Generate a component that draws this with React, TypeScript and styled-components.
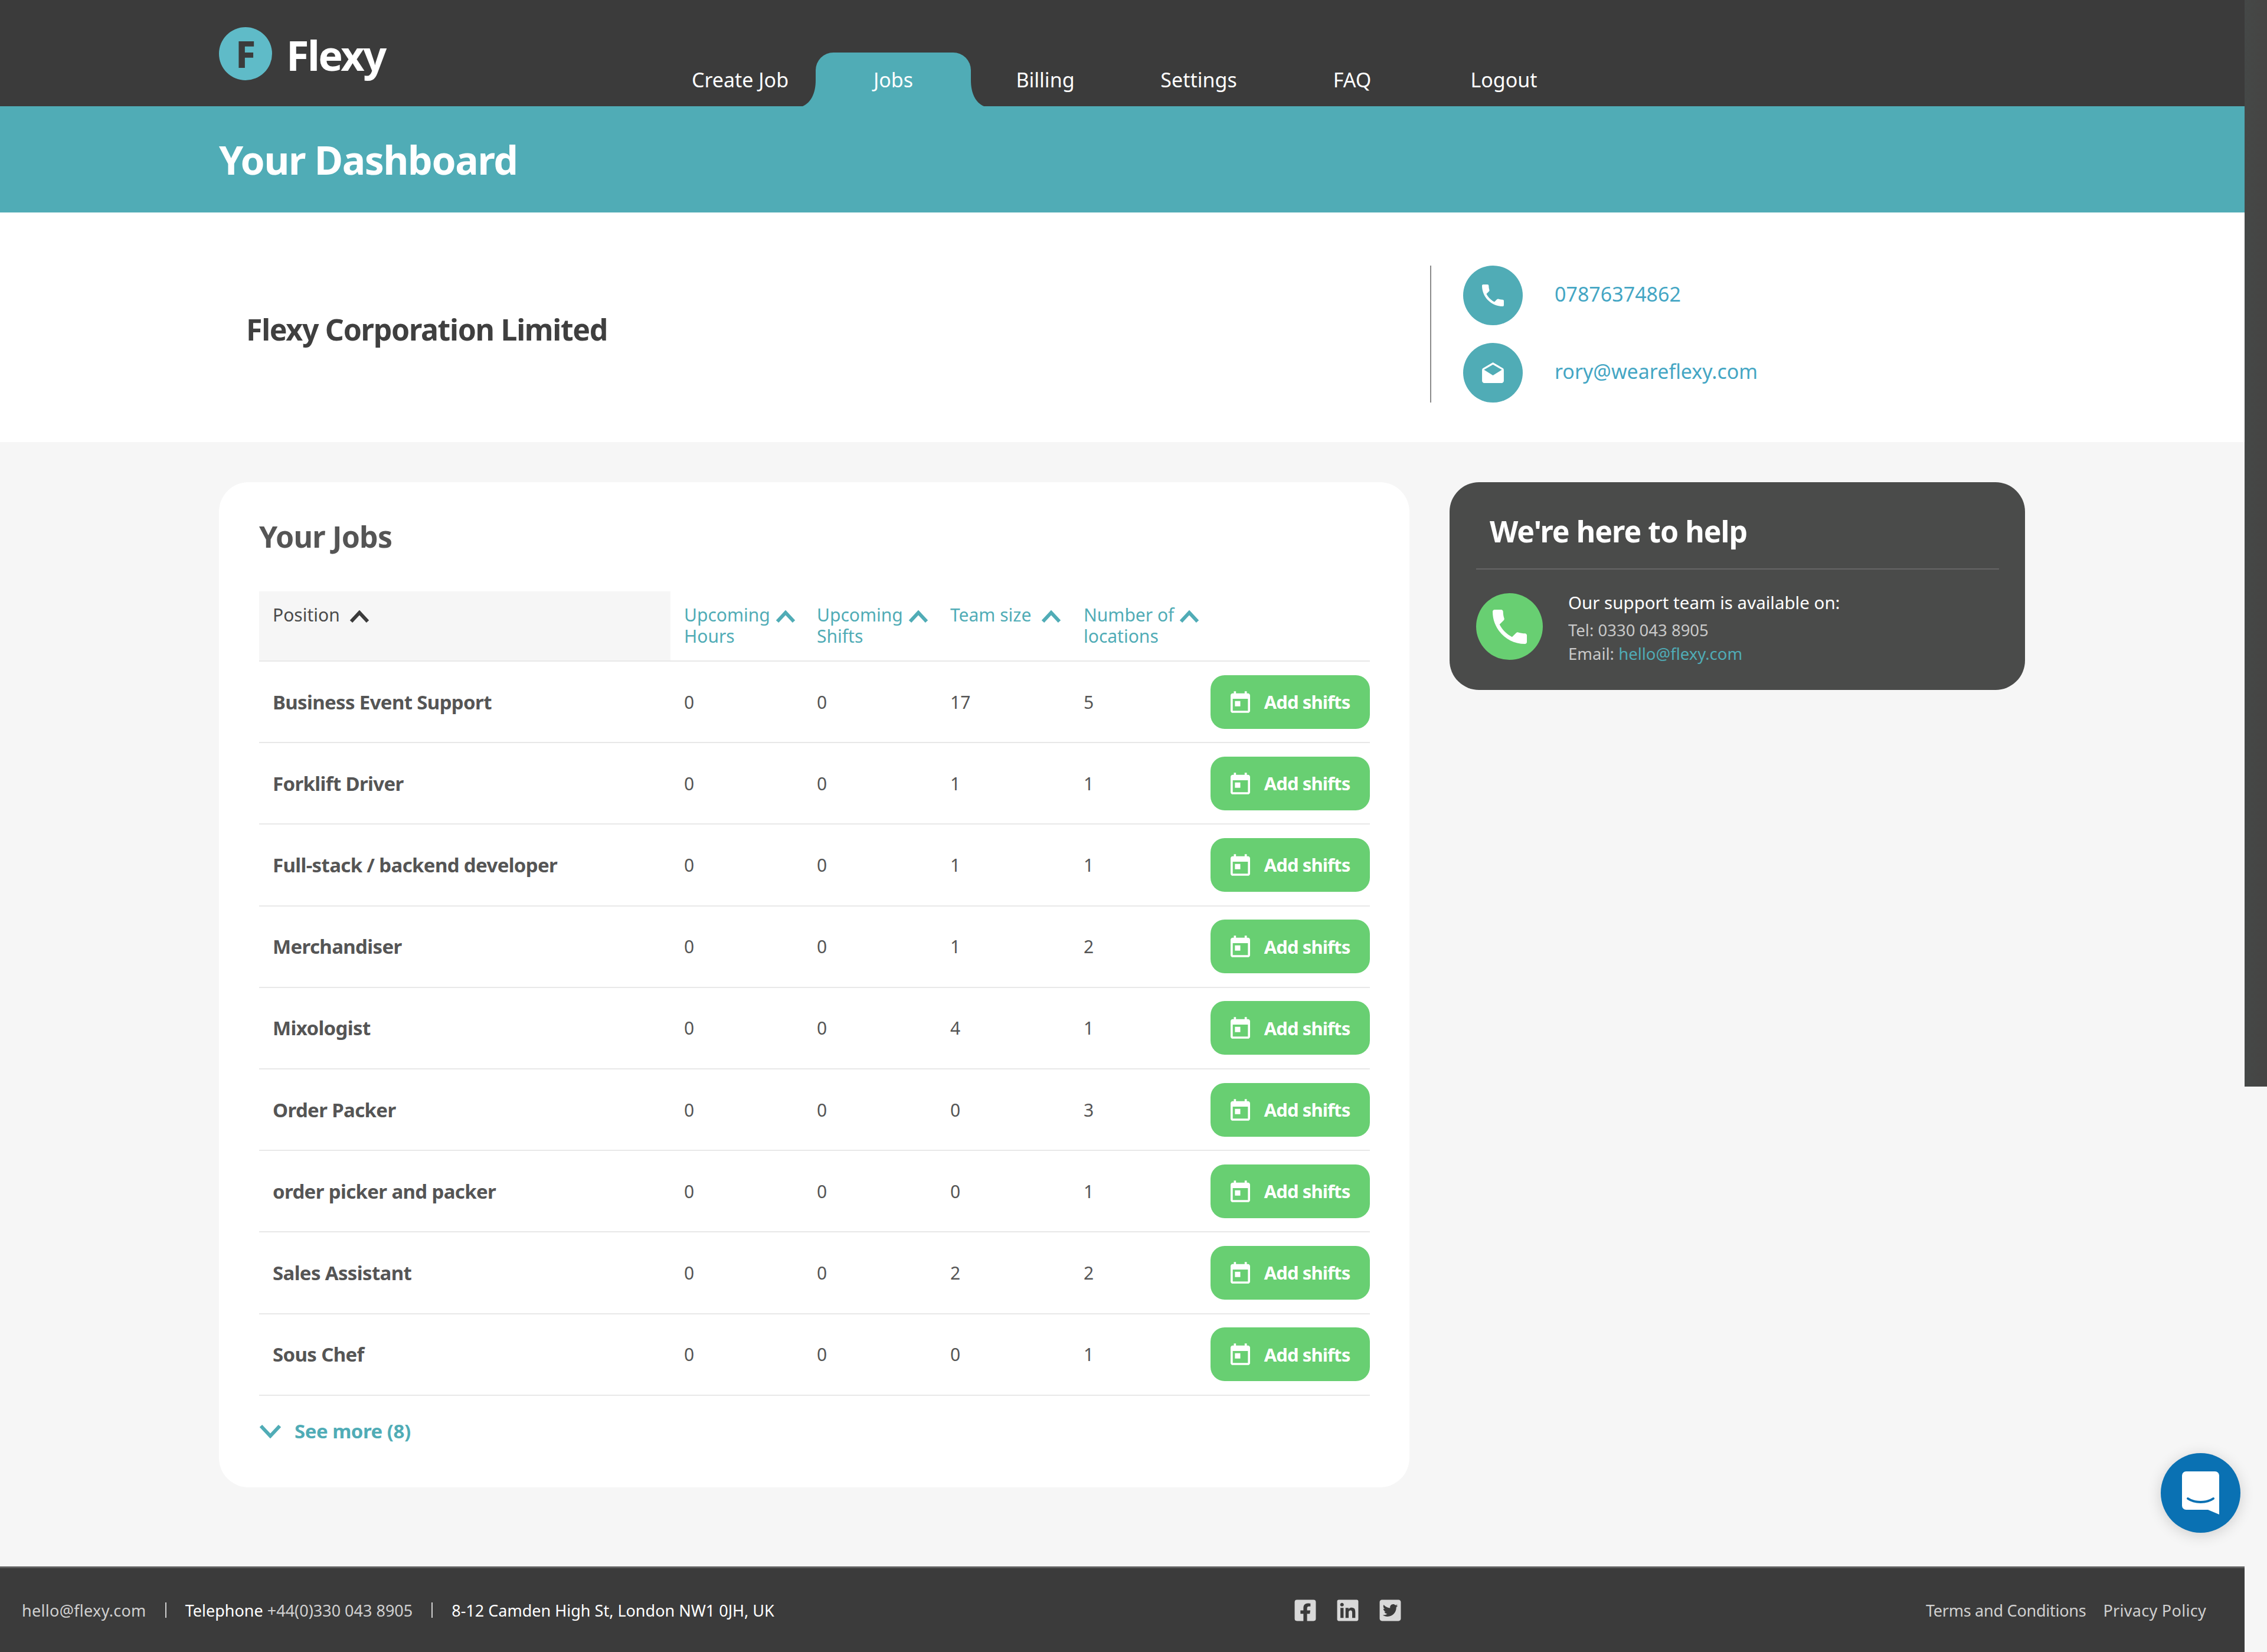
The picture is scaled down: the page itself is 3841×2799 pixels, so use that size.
import React from "react";
import styled, { createGlobalStyle } from "styled-components";
import { FaFacebookSquare, FaLinkedin, FaTwitterSquare } from "react-icons/fa";

const FONT = `"Noto Sans", "Lato", sans-serif`;

const Global = createGlobalStyle`
  html, body { margin: 0; padding: 0; background: #f6f6f6; }
  body { font-family: ${FONT}; color: #555; }
`;

const Page = styled.div`
  width: 3841px;
  height: 2799px;
  display: flex;
  position: relative;
  overflow: hidden;
`;
const Main = styled.div`
  width: 3803px;
  display: flex;
  flex-direction: column;
`;
const ScrollThumb = styled.div`
  width: 38px;
  height: 1841px;
  background: linear-gradient(90deg, #454847, #454443);
`;
const Header = styled.header`
  height: 180px;
  background: #3b3b3b;
  padding-left: 371px;
  display: flex;
  align-items: flex-start;
`;
const Logo = styled.div`
  width: 755px;
  height: 90px;
  margin-top: 46px;
  display: flex;
  align-items: center;
  gap: 24px;
`;
const LogoMark = styled.div`
  width: 90px;
  height: 90px;
  border-radius: 50%;
  background: #5fbbc8;
  color: #3b3b3b;
  font: 800 62px ${FONT};
  display: flex;
  align-items: center;
  justify-content: center;
`;
const LogoWord = styled.div`
  color: #fff;
  font: 700 70px/90px ${FONT};
  letter-spacing: -2.5px;
  margin-top: 3px;
`;
const Nav = styled.nav`
  display: flex;
  align-self: flex-end;
  height: 91px;
`;
const Tab = styled.a<{ $active?: boolean; $w: number }>`
  position: relative;
  width: ${(p) => p.$w}px;
  display: flex;
  justify-content: center;
  padding-top: 24px;
  box-sizing: border-box;
  color: #fff;
  font-size: 34px;
  line-height: 45px;
  background: ${(p) => (p.$active ? "#50acb6" : "transparent")};
  border-radius: ${(p) => (p.$active ? "30px 30px 0 0" : "0")};
`;
const Flare = styled.svg<{ $side: "left" | "right" }>`
  position: absolute;
  bottom: 0;
  width: 22px;
  height: 44px;
  ${(p) => (p.$side === "left" ? "left: -22px;" : "right: -22px;")}
`;
const Band = styled.div`
  height: 180px;
  background: #50acb6;
  padding-left: 371px;
  display: flex;
  align-items: center;
`;
const BandTitle = styled.h1`
  margin: 0;
  color: #fff;
  font: 700 66px/90px ${FONT};
  letter-spacing: -1.4px;
`;
const Company = styled.section`
  height: 389px;
  background: #fff;
  box-sizing: border-box;
  padding: 90px 0 0 417px;
  display: flex;
`;
const CompanyName = styled.h2`
  width: 2006px;
  margin: 0;
  font: 700 50px/216px ${FONT};
  letter-spacing: -1.3px;
  color: #3f3f3f;
`;
const ContactList = styled.div`
  height: 232px;
  border-left: 2px solid #8a8a8a;
  padding-left: 54px;
  display: flex;
  flex-direction: column;
  gap: 30px;
`;
const ContactRow = styled.div`
  display: flex;
  align-items: center;
  gap: 54px;
  height: 101px;
`;
const ContactIcon = styled.div`
  width: 101px;
  height: 101px;
  border-radius: 50%;
  background: #50acb6;
  display: flex;
  align-items: center;
  justify-content: center;
`;
const ContactLink = styled.a`
  color: #44a6c4;
  font-size: 34px;
  line-height: 50px;
  margin-top: -5px;
`;
const Content = styled.main`
  flex: 1;
  padding: 68px 0 0 371px;
  display: flex;
  align-items: flex-start;
  gap: 68px;
`;
const Card = styled.section`
  width: 2017px;
  height: 1703px;
  box-sizing: border-box;
  background: #fff;
  border-radius: 50px;
  padding: 53px 67px 0 68px;
`;
const CardTitle = styled.h2`
  margin: 0 0 54px;
  font: 700 50px/78px ${FONT};
  letter-spacing: -0.8px;
  color: #555;
`;
const Row = styled.div`
  display: grid;
  grid-template-columns: 697px 225px 226px 226px 226px 1fr;
  border-bottom: 2px solid #e8e8e8;
`;
const HeadCell = styled.div<{ $shade?: boolean }>`
  height: 117px;
  box-sizing: border-box;
  padding: 22px 0 0 23px;
  font-size: 30px;
  line-height: 36px;
  color: ${(p) => (p.$shade ? "#4a4a4a" : "#50acb6")};
  background: ${(p) => (p.$shade ? "#f6f6f6" : "transparent")};
`;
const Caret = styled.svg`
  display: inline-block;
  vertical-align: -3px;
`;
const NameCell = styled.div`
  height: 136.2px;
  padding-left: 23px;
  display: flex;
  align-items: center;
  font-weight: 700;
  font-size: 33px;
  letter-spacing: -0.65px;
  color: #555;
`;
const NumCell = styled.div`
  height: 136.2px;
  padding-left: 23px;
  display: flex;
  align-items: center;
  font-size: 30px;
  color: #555;
`;
const ActionCell = styled.div`
  display: flex;
  align-items: center;
  justify-content: flex-end;
`;
const AddButton = styled.button`
  width: 270px;
  height: 91px;
  border: 0;
  border-radius: 24px;
  background: #68cf72;
  color: #fff;
  font: 700 31px ${FONT};
  letter-spacing: -0.9px;
  display: flex;
  align-items: center;
  justify-content: center;
  gap: 24px;
  padding: 0;
`;
const SeeMore = styled.a`
  display: flex;
  align-items: center;
  gap: 22px;
  margin-top: 38px;
  color: #50acb6;
  font-weight: 700;
  font-size: 33px;
  letter-spacing: -0.5px;
  line-height: 44px;
`;
const Help = styled.aside`
  width: 975px;
  height: 352px;
  box-sizing: border-box;
  border-radius: 50px;
  background: #4a4b4a;
  padding: 44px 44px 0 45px;
`;
const HelpTitle = styled.h2`
  margin: 0;
  padding: 4px 0 22px 23px;
  height: 104px;
  box-sizing: border-box;
  border-bottom: 2px solid #666;
  color: #fff;
  font: 700 50px/70px ${FONT};
  letter-spacing: -1px;
`;
const HelpBody = styled.div`
  display: flex;
  gap: 43px;
  margin-top: 40px;
`;
const HelpIcon = styled.div`
  width: 113px;
  height: 113px;
  border-radius: 50%;
  background: #68cf72;
  display: flex;
  align-items: center;
  justify-content: center;
`;
const HelpText = styled.div`
  display: flex;
  flex-direction: column;
  color: #c9c9c9;
  font-size: 27.5px;
  line-height: 40px;
`;
const HelpLead = styled.div`
  color: #fff;
  font-size: 29.5px;
  line-height: 38px;
  margin: -3px 0 8px;
`;
const HelpLink = styled.span`
  color: #50acb6;
`;
const Footer = styled.footer`
  height: 145px;
  box-sizing: border-box;
  background: #3b3b3b;
  border-top: 3px solid #5f5f5f;
  padding: 0 65px 0 37px;
  display: grid;
  grid-template-columns: 2154px 1fr auto;
  align-items: center;
  font-size: 27px;
  color: #d0d0d0;
`;
const FooterLeft = styled.div`
  display: flex;
  align-items: center;
`;
const FooterMail = styled.span`
  letter-spacing: 0.3px;
`;
const FooterSep = styled.span`
  width: 2px;
  height: 26px;
  background: #d0d0d0;
  margin: 0 32px;
`;
const FooterStrong = styled.span`
  color: #fff;
`;
const Social = styled.div`
  display: flex;
  gap: 31px;
  color: #d9d9d9;
  font-size: 41px;
  line-height: 0;
`;
const FooterLinks = styled.div`
  display: flex;
  gap: 29px;
`;
const FooterLink = styled.span<{ $tight?: boolean }>`
  letter-spacing: ${(p) => (p.$tight ? "-0.25px" : "0.3px")};
`;
const Chat = styled.button`
  position: absolute;
  left: 3661px;
  top: 2462px;
  width: 135px;
  height: 135px;
  border: 0;
  padding: 0;
  border-radius: 50%;
  background: #0a71b3;
  box-shadow: 0 4px 24px rgba(0, 0, 0, 0.16);
  display: flex;
  align-items: center;
  justify-content: center;
`;

const PhoneIcon = ({ size }: { size: number }) => (
  <svg width={size} height={size} viewBox="3 3 18 18" fill="#fff">
    <path d="M6.62 10.79c1.44 2.83 3.76 5.14 6.59 6.59l2.2-2.2c.27-.27.67-.36 1.02-.24 1.12.37 2.33.57 3.57.57.55 0 1 .45 1 1V20c0 .55-.45 1-1 1-9.39 0-17-7.61-17-17 0-.55.45-1 1-1h3.5c.55 0 1 .45 1 1 0 1.25.2 2.45.57 3.57.11.35.03.74-.25 1.02l-2.2 2.2z" />
  </svg>
);

const MailIcon = () => (
  <svg width="37" height="35" viewBox="2 1 20 19" fill="#fff">
    <path d="M21.99 8c0-.72-.37-1.35-.94-1.7L12 1 2.95 6.3C2.38 6.65 2 7.28 2 8v10c0 1.1.9 2 2 2h16c1.1 0 2-.9 2-2l-.01-10zM12 13L3.74 7.84 12 3l8.26 4.84L12 13z" />
  </svg>
);

const CalendarIcon = () => (
  <svg width="33" height="37" viewBox="3 1 18 20" fill="#fff">
    <path d="M19 3h-1V1h-2v2H8V1H6v2H5c-1.11 0-1.99.9-1.99 2L3 19c0 1.1.89 2 2 2h14c1.1 0 2-.9 2-2V5c0-1.1-.9-2-2-2zm0 16H5V8h14v11zM7 10h5v5H7z" />
  </svg>
);

const Up = ({ color }: { color: string }) => (
  <Caret width={36} height={22} viewBox="0 0 34 22" fill="none">
    <path d="M3 19 17 4l14 15" stroke={color} strokeWidth="6" strokeLinejoin="miter" />
  </Caret>
);

const Down = () => (
  <svg width="38" height="24" viewBox="0 0 38 24" fill="none">
    <path d="M3 3 19 20 35 3" stroke="#50acb6" strokeWidth="6" />
  </svg>
);

const ChatGlyph = () => (
  <svg width="63" height="73" viewBox="0 0 63 73">
    <path fill="#fff" d="M7 0h49a7 7 0 0 1 7 7v66L44 65H7a7 7 0 0 1-7-7V7a7 7 0 0 1 7-7z" />
    <path fill="none" stroke="#0a71b3" strokeWidth="4" strokeLinecap="round" d="M10 46c11 8 32 8 43 0" />
  </svg>
);

const jobs: [string, number, number, number, number][] = [
  ["Business Event Support", 0, 0, 17, 5],
  ["Forklift Driver", 0, 0, 1, 1],
  ["Full-stack / backend developer", 0, 0, 1, 1],
  ["Merchandiser", 0, 0, 1, 2],
  ["Mixologist", 0, 0, 4, 1],
  ["Order Packer", 0, 0, 0, 3],
  ["order picker and packer", 0, 0, 0, 1],
  ["Sales Assistant", 0, 0, 2, 2],
  ["Sous Chef", 0, 0, 0, 1],
];

const nav: [string, number, boolean][] = [
  ["Create Job", 256, false],
  ["Jobs", 263, true],
  ["Billing", 252, false],
  ["Settings", 268, false],
  ["FAQ", 252, false],
  ["Logout", 262, false],
];

export default function App() {
  return (
    <Page>
      <Global />
      <Main>
        <Header>
          <Logo>
            <LogoMark>F</LogoMark>
            <LogoWord>Flexy</LogoWord>
          </Logo>
          <Nav>
            {nav.map(([label, w, active]) => (
              <Tab key={label} $w={w} $active={active}>
                {active && (
                  <Flare $side="left" viewBox="0 0 22 44">
                    <path fill="#50acb6" d="M22 0C22 22 14 38 0 44h22z" />
                  </Flare>
                )}
                {label}
                {active && (
                  <Flare $side="right" viewBox="0 0 22 44">
                    <path fill="#50acb6" d="M0 0C0 22 8 38 22 44H0z" />
                  </Flare>
                )}
              </Tab>
            ))}
          </Nav>
        </Header>
        <Band>
          <BandTitle>Your Dashboard</BandTitle>
        </Band>
        <Company>
          <CompanyName>Flexy Corporation Limited</CompanyName>
          <ContactList>
            <ContactRow>
              <ContactIcon>
                <PhoneIcon size={37} />
              </ContactIcon>
              <ContactLink>07876374862</ContactLink>
            </ContactRow>
            <ContactRow>
              <ContactIcon>
                <MailIcon />
              </ContactIcon>
              <ContactLink>rory@weareflexy.com</ContactLink>
            </ContactRow>
          </ContactList>
        </Company>
        <Content>
          <Card>
            <CardTitle>Your Jobs</CardTitle>
            <Row>
              <HeadCell $shade>
                Position&nbsp;&nbsp;<Up color="#3b3b3b" />
              </HeadCell>
              <HeadCell>
                Upcoming <Up color="#50acb6" />
                <br />
                Hours
              </HeadCell>
              <HeadCell>
                Upcoming <Up color="#50acb6" />
                <br />
                Shifts
              </HeadCell>
              <HeadCell>
                Team size&nbsp; <Up color="#50acb6" />
              </HeadCell>
              <HeadCell>
                Number of <Up color="#50acb6" />
                <br />
                locations
              </HeadCell>
              <HeadCell />
            </Row>
            {jobs.map(([name, h, s, t, l]) => (
              <Row key={name}>
                <NameCell>{name}</NameCell>
                <NumCell>{h}</NumCell>
                <NumCell>{s}</NumCell>
                <NumCell>{t}</NumCell>
                <NumCell>{l}</NumCell>
                <ActionCell>
                  <AddButton>
                    <CalendarIcon />
                    Add shifts
                  </AddButton>
                </ActionCell>
              </Row>
            ))}
            <SeeMore>
              <Down />
              See more (8)
            </SeeMore>
          </Card>
          <Help>
            <HelpTitle>We're here to help</HelpTitle>
            <HelpBody>
              <HelpIcon>
                <PhoneIcon size={58} />
              </HelpIcon>
              <HelpText>
                <HelpLead>Our support team is available on:</HelpLead>
                <div>Tel: 0330 043 8905</div>
                <div>
                  Email: <HelpLink>hello@flexy.com</HelpLink>
                </div>
              </HelpText>
            </HelpBody>
          </Help>
        </Content>
        <Footer>
          <FooterLeft>
            <FooterMail>hello@flexy.com</FooterMail>
            <FooterSep />
            <FooterStrong>Telephone&nbsp;</FooterStrong>+44(0)330 043 8905
            <FooterSep />
            <FooterStrong>8-12 Camden High St, London NW1 0JH, UK</FooterStrong>
          </FooterLeft>
          <Social>
            <FaFacebookSquare />
            <FaLinkedin />
            <FaTwitterSquare />
          </Social>
          <FooterLinks>
            <FooterLink $tight>Terms and Conditions</FooterLink>
            <FooterLink>Privacy Policy</FooterLink>
          </FooterLinks>
        </Footer>
      </Main>
      <ScrollThumb />
      <Chat>
        <ChatGlyph />
      </Chat>
    </Page>
  );
}
